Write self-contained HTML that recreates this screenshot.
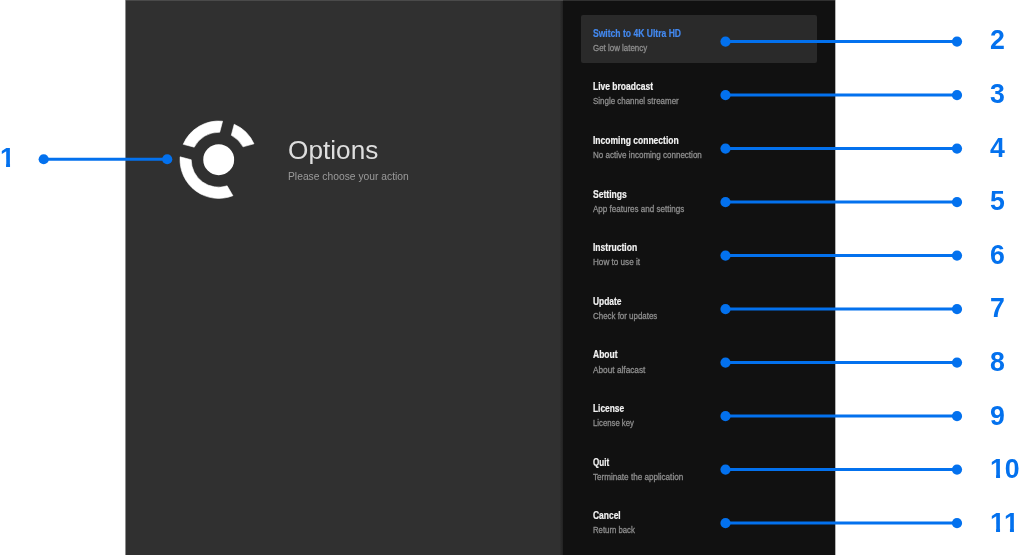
<!DOCTYPE html>
<html lang="en">
<head>
<meta charset="utf-8">
<title>Options</title>
<style>
html,body{margin:0;padding:0;background:#fff;}
body{width:1024px;height:555px;position:relative;overflow:hidden;font-family:"Liberation Sans",sans-serif;}
.screen{position:absolute;left:125px;top:0;width:710px;height:555px;background:#303030;}
.edgeL{position:absolute;left:125px;top:0;width:1px;height:555px;background:#8c8c8c;}
.edgeR{position:absolute;left:835px;top:0;width:1px;height:555px;background:#b4b4b4;}
.topline{position:absolute;left:0;top:0;width:438px;height:1px;background:#4a4a4a;}
.panel{position:absolute;left:438px;top:0;width:272px;height:555px;background:#111111;border-top:1px solid #303030;box-sizing:border-box;}
.shadow{position:absolute;left:435px;top:1px;width:3px;height:554px;background:linear-gradient(to right,#2f2f2f,#222);}
.logo{position:absolute;left:0;top:0;filter:blur(0.45px);}
.head{position:absolute;left:162.9px;top:0;margin:0;white-space:nowrap;}
.head h1{filter:blur(0.4px);position:absolute;left:0;top:129.6px;margin:0;font-weight:400;font-size:26.3px;line-height:40px;color:#dedede;transform-origin:0 50%;transform:scaleX(0.9964);}
.head p{filter:blur(0.4px);position:absolute;left:0;top:166px;margin:0;font-size:10.5px;line-height:20px;color:#9b9b9b;transform-origin:0 50%;transform:scaleX(0.9808);}
ul.menu{list-style:none;margin:0;padding:0;position:absolute;left:0;top:-1px;}
.row{position:absolute;left:18px;width:236px;height:48px;border-radius:2px;white-space:nowrap;}
.row.sel{background:#2a2a2a;}
.row span{filter:blur(0.4px);position:absolute;left:11.6px;transform-origin:0 50%;display:block;}
.row .t{top:11.1px;font-weight:700;font-size:10.4px;line-height:16px;color:#f2f2f2;-webkit-text-stroke:0.2px #f2f2f2;}
.row.sel .t{color:#4389f0;-webkit-text-stroke:0.2px #4389f0;}
.row .s{top:25.5px;font-size:9.0px;line-height:14px;color:#8e8e8e;-webkit-text-stroke:0.3px #8e8e8e;}
.over{position:absolute;left:0;top:0;filter:blur(0.4px);}
.over line{stroke:#0371ee;stroke-width:3;}
.over circle{fill:#0371ee;}
.one{display:inline-block;clip-path:polygon(0 0,0.377em 0,0.377em 100%,0.227em 100%,0.227em 16px,0 16px);}
.one+.one{margin-left:-1px;}
.num{filter:blur(0.4px);position:absolute;font-weight:700;font-size:27.8px;line-height:30px;margin-top:-16.1px;transform-origin:0 50%;transform:scaleX(.96);color:#0371ee;white-space:nowrap;}
</style>
</head>
<body>
<div class="screen">
  <div class="topline"></div>
  <div class="shadow"></div>
  <div class="head">
    <h1>Options</h1>
    <p>Please choose your action</p>
  </div>
  <div class="panel">
   <ul class="menu">
    <li class="row sel" style="top:15px"><span class="t" style="top:10.81px;transform:scaleX(0.8239)">Switch to 4K Ultra HD</span><span class="s" style="top:25.88px;transform:scaleX(0.8809)">Get low latency</span></li>
    <li class="row" style="top:69px"><span class="t" style="top:10.42px;transform:scaleX(0.8181)">Live broadcast</span><span class="s" style="top:25.49px;transform:scaleX(0.8830)">Single channel streamer</span></li>
    <li class="row" style="top:122px"><span class="t" style="top:11.03px;transform:scaleX(0.8202)">Incoming connection</span><span class="s" style="top:26.10px;transform:scaleX(0.8913)">No active incoming connection</span></li>
    <li class="row" style="top:176px"><span class="t" style="top:10.64px;transform:scaleX(0.8246)">Settings</span><span class="s" style="top:25.71px;transform:scaleX(0.8935)">App features and settings</span></li>
    <li class="row" style="top:229px"><span class="t" style="top:11.25px;transform:scaleX(0.8215)">Instruction</span><span class="s" style="top:26.32px;transform:scaleX(0.9035)">How to use it</span></li>
    <li class="row" style="top:283px"><span class="t" style="top:10.86px;transform:scaleX(0.8093)">Update</span><span class="s" style="top:25.93px;transform:scaleX(0.8803)">Check for updates</span></li>
    <li class="row" style="top:336px"><span class="t" style="top:11.47px;transform:scaleX(0.8165)">About</span><span class="s" style="top:26.54px;transform:scaleX(0.9187)">About alfacast</span></li>
    <li class="row" style="top:390px"><span class="t" style="top:11.08px;transform:scaleX(0.8037)">License</span><span class="s" style="top:26.15px;transform:scaleX(0.8606)">License key</span></li>
    <li class="row" style="top:443px"><span class="t" style="top:11.69px;transform:scaleX(0.7749)">Quit</span><span class="s" style="top:26.76px;transform:scaleX(0.9015)">Terminate the application</span></li>
    <li class="row" style="top:497px"><span class="t" style="top:11.30px;transform:scaleX(0.8129)">Cancel</span><span class="s" style="top:26.37px;transform:scaleX(0.8614)">Return back</span></li>
   </ul>
  </div>
</div>
<div class="edgeL"></div>
<div class="edgeR"></div>
<svg class="logo" width="1024" height="555" viewBox="0 0 1024 555">
  <g fill="#ffffff" stroke="#ffffff" stroke-width="0.6" stroke-linejoin="round">
    <path d="M222.60 121.20 A38.70 38.70 0 0 0 183.19 144.32 L194.22 147.17 A27.50 27.50 0 0 1 219.71 132.22 Z"/>
    <path d="M253.99 143.82 A38.70 38.70 0 0 0 234.21 124.24 L231.31 135.26 A27.50 27.50 0 0 1 243.00 146.83 Z"/>
    <path d="M180.11 156.85 A38.70 38.70 0 0 0 232.93 195.69 L227.15 185.87 A27.50 27.50 0 0 1 191.20 159.72 Z"/>
  </g>
  <circle cx="218.7" cy="159.7" r="15.45" fill="#ffffff"/>
</svg>
<svg class="over" width="1024" height="555" viewBox="0 0 1024 555">
  <line x1="725.5" y1="41.55" x2="957" y2="41.55"/><circle cx="725.5" cy="41.55" r="5.1"/><circle cx="957" cy="41.55" r="5.1"/>
<line x1="725.5" y1="95.05" x2="957" y2="95.05"/><circle cx="725.5" cy="95.05" r="5.1"/><circle cx="957" cy="95.05" r="5.1"/>
<line x1="725.5" y1="148.55" x2="957" y2="148.55"/><circle cx="725.5" cy="148.55" r="5.1"/><circle cx="957" cy="148.55" r="5.1"/>
<line x1="725.5" y1="202.05" x2="957" y2="202.05"/><circle cx="725.5" cy="202.05" r="5.1"/><circle cx="957" cy="202.05" r="5.1"/>
<line x1="725.5" y1="255.55" x2="957" y2="255.55"/><circle cx="725.5" cy="255.55" r="5.1"/><circle cx="957" cy="255.55" r="5.1"/>
<line x1="725.5" y1="309.05" x2="957" y2="309.05"/><circle cx="725.5" cy="309.05" r="5.1"/><circle cx="957" cy="309.05" r="5.1"/>
<line x1="725.5" y1="362.55" x2="957" y2="362.55"/><circle cx="725.5" cy="362.55" r="5.1"/><circle cx="957" cy="362.55" r="5.1"/>
<line x1="725.5" y1="416.05" x2="957" y2="416.05"/><circle cx="725.5" cy="416.05" r="5.1"/><circle cx="957" cy="416.05" r="5.1"/>
<line x1="725.5" y1="469.55" x2="957" y2="469.55"/><circle cx="725.5" cy="469.55" r="5.1"/><circle cx="957" cy="469.55" r="5.1"/>
<line x1="725.5" y1="523.05" x2="957" y2="523.05"/><circle cx="725.5" cy="523.05" r="5.1"/><circle cx="957" cy="523.05" r="5.1"/>
<line x1="43.7" y1="159.25" x2="167.2" y2="159.25"/><circle cx="43.7" cy="159.25" r="5.1"/><circle cx="167.2" cy="159.25" r="5.1"/>
</svg>
<span class="num" style="left:990.1px;top:41.55px">2</span>
<span class="num" style="left:990.1px;top:95.15px">3</span>
<span class="num" style="left:990.1px;top:148.75px">4</span>
<span class="num" style="left:990.1px;top:202.35px">5</span>
<span class="num" style="left:990.1px;top:255.95px">6</span>
<span class="num" style="left:990.1px;top:309.55px">7</span>
<span class="num" style="left:990.1px;top:363.15px">8</span>
<span class="num" style="left:990.1px;top:416.75px">9</span>
<span class="num" style="left:990.1px;top:470.35px"><span class="one">1</span>0</span>
<span class="num" style="left:990.1px;top:523.95px"><span class="one">1</span><span class="one">1</span></span>
<span class="num" style="left:0.2px;top:158.6px"><span class="one">1</span></span>
</body>
</html>
